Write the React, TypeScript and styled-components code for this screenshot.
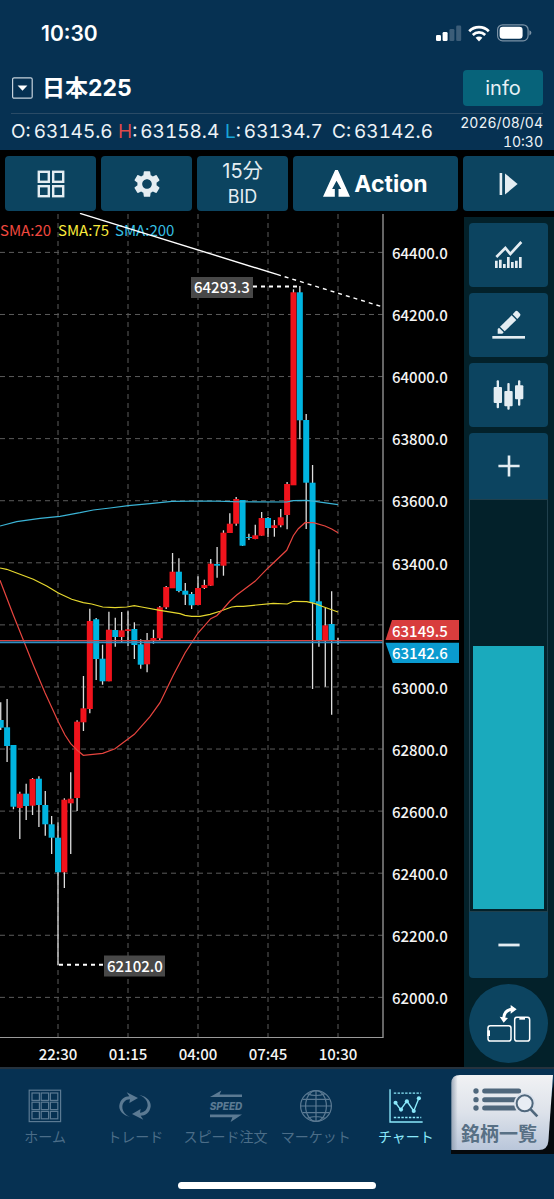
import React, { useState } from "react";
import styled, { createGlobalStyle } from "styled-components";
import { MdSettings } from "react-icons/md";

const UI_FONT = `Inter, "Noto Sans CJK JP", sans-serif`;
const CHART_FONT = `"Noto Sans CJK JP", sans-serif`;

const color = {
  header: "#063152",
  button: "#0c4460",
  rail: "#03212a",
  icon: "#e4edf2",
  up: "#f0131c",
  down: "#00b4e0",
  muted: "#4b6d88",
  active: "#8be9fb",
};

const GlobalStyle = createGlobalStyle`
  * { box-sizing: border-box; }
  body { margin: 0; background: #000; font-family: ${UI_FONT}; }
  button, select, input { font: inherit; margin: 0; }
  svg { display: block; flex: none; }
`;

const Screen = styled.div`
  min-height: 100vh;
  display: flex;
  flex-direction: column;
  background: #000;
  color: #fff;
`;

/* ---------- header ---------- */

const Header = styled.header`
  background: ${color.header};
`;

const StatusBar = styled.div`
  display: flex;
  align-items: center;
  justify-content: space-between;
  height: 66px;
  padding: 0 22px 0 41px;
`;

const Clock = styled.time`
  font-size: 21px;
  font-weight: 600;
`;

const StatusIcons = styled.div`
  display: flex;
  align-items: center;
  gap: 6px;
`;

const TitleRow = styled.div`
  display: flex;
  align-items: center;
  height: 48px;
  margin: 0 11px;
  padding-bottom: 3px;
  border-bottom: 1px solid #2a4b66;
`;

const SymbolButton = styled.button`
  display: flex;
  align-items: center;
  gap: 9px;
  padding: 0;
  border: 0;
  background: none;
  color: #fff;
  font-size: 23px;
  font-weight: 700;
  line-height: 32px;
`;

const InfoButton = styled.button`
  width: 80px;
  height: 36px;
  margin-left: auto;
  padding: 0;
  border: 0;
  border-radius: 4px;
  background: #07637a;
  color: #e6f1f5;
  font-size: 20px;
`;

const QuoteRow = styled.div`
  display: flex;
  justify-content: space-between;
  align-items: center;
  height: 36px;
  padding: 0 11px;
`;

const QuoteList = styled.dl`
  display: grid;
  grid-template-columns: repeat(4, 107px);
  margin: 0;
`;

const Quote = styled.div<{ $tint?: string }>`
  display: flex;
  gap: 3px;
  font-size: 19px;
  line-height: 24px;
  color: #edf3f7;
  font-variant-numeric: tabular-nums;

  dd { margin: 0; }
  b { font-weight: 400; color: ${(p) => p.$tint ?? "inherit"}; }
`;

const Stamp = styled.time`
  flex: none;
  text-align: right;
  font-size: 14px;
  line-height: 19px;
  font-variant-numeric: tabular-nums;
  color: #edf3f7;
`;

/* ---------- toolbar ---------- */

const Toolbar = styled.div`
  display: grid;
  grid-template-columns: 91fr 91fr 91fr 165fr 91fr;
  gap: 5px;
  padding: 6px 0 2px 5px;
`;

const ToolButton = styled.button<{ $flushRight?: boolean }>`
  display: flex;
  align-items: center;
  justify-content: center;
  gap: 4px;
  height: 55px;
  padding: 0;
  border: 0;
  border-radius: ${(p) => (p.$flushRight ? "4px 0 0 4px" : "4px")};
  background: ${color.button};
  color: ${color.icon};
`;

const Interval = styled.span`
  display: grid;
  text-align: center;
  font-size: 18px;
  line-height: 25px;
`;

const Minutes = styled.span`
  font-size: 20px;
`;

const ActionLabel = styled.span`
  color: #fff;
  font-size: 23px;
  font-weight: 700;
`;

/* ---------- chart and side rail ---------- */

const Main = styled.main`
  display: grid;
  grid-template-columns: minmax(0, 1fr) 90px;
  flex: 1;
`;

const ChartSvg = styled.svg`
  width: 100%;
  height: auto;
  font-family: ${CHART_FONT};
  font-size: 15px;
  font-weight: 500;
`;

const Rail = styled.aside`
  display: flex;
  flex-direction: column;
  gap: 6px;
  margin-top: 4px;
  padding: 6px 6px 4px 5px;
  background: ${color.rail};
`;

const RailButton = styled.button<{ $shape?: "top" | "bottom" | "round" }>`
  display: flex;
  align-items: center;
  justify-content: center;
  width: 100%;
  height: ${(p) => (p.$shape === "round" ? "79px" : p.$shape ? "66px" : "64px")};
  padding: 0;
  border: 0;
  border-radius: ${(p) =>
    p.$shape === "round" ? "50%" : p.$shape === "top" ? "4px 4px 0 0" : p.$shape === "bottom" ? "0 0 4px 4px" : "4px"};
  background: ${color.button};
`;

const Zoom = styled.div`
  display: flex;
  flex-direction: column;
  flex: 1;
`;

const ZoomTrack = styled.div`
  display: flex;
  flex: 1;
  padding: 4px 3px 2px;
  border: 1px solid #20404d;
`;

const ZoomRange = styled.input<{ $value: number }>`
  flex: 1;
  width: 100%;
  height: auto;
  min-height: 0;
  appearance: none;
  writing-mode: vertical-lr;
  direction: rtl;
  background: linear-gradient(to top, #1aaabd ${(p) => p.$value}%, transparent ${(p) => p.$value}%);

  &::-webkit-slider-thumb {
    appearance: none;
    width: 1px;
    height: 1px;
    background: transparent;
  }
`;

/* ---------- bottom navigation ---------- */

const Footer = styled.footer`
  background: ${color.header};
  border-top: 2px solid #26323d;
`;

const Nav = styled.nav`
  display: flex;
  align-items: flex-start;
  height: 85px;
`;

const NavLink = styled.a<{ $active?: boolean }>`
  display: flex;
  flex: 1;
  flex-direction: column;
  align-items: center;
  gap: 4px;
  min-width: 0;
  padding-top: 20px;
  color: ${(p) => (p.$active ? color.active : color.muted)};
  font-size: 14px;
  line-height: 20px;
  white-space: nowrap;
  text-decoration: none;

  svg { color: ${(p) => (p.$active ? color.active : "#5b7a93")}; }
`;

const ListLink = styled.a`
  position: relative;
  display: flex;
  flex-direction: column;
  align-items: center;
  gap: 2px;
  width: 103px;
  height: 79px;
  margin-top: 6px;
  padding: 12px 7px 0 0;
  color: #587085;
  font-size: 19px;
  font-weight: 700;
  line-height: 28px;
  text-decoration: none;

  > * { position: relative; }
`;

const ListPlate = styled.svg`
  && {
    position: absolute;
    inset: 0;
    width: 100%;
    height: 100%;
  }
`;

const HomeBar = styled.div`
  display: flex;
  justify-content: center;
  padding: 28px 0 10px;

  &::after {
    content: "";
    width: 198px;
    height: 7px;
    border-radius: 4px;
    background: #fff;
  }
`;

/* ---------- chart data ---------- */

type Candle = [dir: "u" | "d", top: number, bottom: number, high: number, low: number];

const candles: Candle[] = [
  ["d", 720, 727.7, 702.3, 730], ["d", 727.3, 746, 699, 762], ["d", 745, 806.7, 745, 809.3],
  ["u", 793.7, 808, 791.7, 839], ["d", 793.7, 806, 783.7, 820], ["u", 779, 805.7, 778, 815],
  ["d", 778.7, 805, 776.3, 827], ["d", 805, 824.3, 791, 835.7], ["d", 824.3, 837.7, 816, 854],
  ["d", 837.7, 872.3, 822.3, 965], ["u", 799.7, 872.3, 798.3, 888], ["u", 798.7, 803.3, 772.3, 854],
  ["u", 721.7, 798, 720.3, 811], ["u", 708.3, 722.3, 676, 731], ["u", 621, 709, 608.7, 713.3],
  ["d", 619.3, 659, 618, 680], ["d", 658.7, 681.3, 644.7, 684.7], ["u", 629.7, 681.3, 611.7, 681.3],
  ["d", 630, 637, 617.7, 646.7], ["u", 630.3, 637, 612, 642.7], ["u", 629.3, 631, 611.3, 646],
  ["d", 629, 645, 622.3, 659], ["d", 644.3, 664.7, 639.3, 668.7], ["u", 641, 664.3, 633, 672.3],
  ["u", 638, 640.7, 629.7, 643.7], ["u", 607.3, 638.3, 606, 640.3], ["u", 587, 607.3, 586, 609],
  ["u", 571.7, 588.3, 553, 588], ["d", 571.7, 591, 558.3, 592.3], ["d", 590.7, 594.7, 583, 605],
  ["d", 594, 605.3, 592, 609], ["u", 588, 605, 576.3, 605], ["u", 585, 588, 579.7, 589],
  ["u", 563.7, 585.7, 559, 586], ["d", 564, 565.7, 547, 577.7], ["u", 532.7, 565.7, 530.3, 575.7],
  ["u", 523.7, 533, 513.3, 533], ["u", 499, 523.7, 497, 525.7], ["d", 500, 545.7, 500, 546],
  ["d", 537, 538, 533.7, 540], ["u", 535.3, 539, 524.7, 539.3], ["u", 518, 535.7, 512, 535.7],
  ["d", 518, 528, 517, 537.3], ["u", 525.3, 528, 520, 536.7], ["u", 517.3, 525.3, 509, 527.3],
  ["u", 484, 515, 482, 529.3], ["u", 292.3, 485.3, 289.3, 485], ["d", 292.3, 420.3, 286, 439.3],
  ["d", 420, 482.7, 414, 529], ["d", 482.7, 602.7, 465, 689], ["d", 601.3, 640.3, 549.3, 646.7],
  ["u", 625.3, 640.3, 607.7, 686.7], ["d", 624, 640, 591.3, 714.7], ["d", 641.7, 643, 638, 644.7],
];

const sma20 =
  "0,580.3 13.3,615 24,641.7 33.3,665 45,692.7 58.3,721.7 65,735 70.7,743.7 77,750 83.3,755.3 102.7,753.3 115,748.7 134.3,734.3 150,716.7 160,702.7 173.3,675.3 185,653 198,633 210.7,618.7 216.7,615.7 222.3,610 230,601 236.7,595 255,581.3 268.3,567.7 286.7,550.3 293.3,535.7 298.3,528.7 305,522.7 313.3,522.7 325,526 331.7,529 338,532.7";
const sma75 =
  "0,568 6.7,569.3 20,574.3 33.3,579.3 46.7,586 58.3,593 71.7,599.3 83.3,602.7 91.7,604 102.7,607 115,607.7 126.7,607 134.3,605.7 141.7,607 160,610.3 180,613.7 185,615.3 191.7,616.3 200,616.3 210,614.3 220,611.3 231.7,607 236.7,606.3 243.3,606.3 273.3,603.3 287.3,604 293.3,601.3 306.7,601.7 315,603.7 323.3,606.7 338,612";
const sma200 =
  "0,526 16.7,521.7 40,518.3 60,516.3 80,512.7 93.3,510 110,508 128.3,505.7 150,503.7 171.7,501.3 210,501 233.3,501.7 286.7,502 293.3,500.7 306.7,500.3 315,501.3 338,504.7";

const PRICE_TOP = 64400;
const PRICE_STEP = 200;
const prices = Array.from({ length: 13 }, (_, i) => PRICE_TOP - i * PRICE_STEP);
const times = ["22:30", "01:15", "04:00", "07:45", "10:30"];

const priceY = (p: number) => 252.4 + ((PRICE_TOP - p) / PRICE_STEP) * 62.08;
const timeX = (i: number) => 58 + i * 70;
const candleX = (i: number) => 58 + (i - 9) * 6.364;

function PriceChart() {
  return (
    <ChartSvg viewBox="0 213 464 854" role="img" aria-label="日本225 15分足チャート">
      <g stroke="#5c5c5c" strokeWidth="1" strokeDasharray="5 4">
        {prices.map((p) => (
          <line key={p} x1="0" x2="383" y1={priceY(p)} y2={priceY(p)} />
        ))}
        {times.map((t, i) => (
          <line key={t} x1={timeX(i)} x2={timeX(i)} y1="214" y2="1037" />
        ))}
      </g>

      <g fontWeight="400">
        <text x="0" y="235.5" fill="#f0483f">SMA:20</text>
        <text x="58" y="235.5" fill="#f9ea3c">SMA:75</text>
        <text x="115" y="235.5" fill="#35bfe2">SMA:200</text>
      </g>

      {candles.map(([dir, top, bottom, high, low], i) => (
        <g key={i}>
          <line x1={candleX(i)} x2={candleX(i)} y1={high} y2={low} stroke="#dedede" strokeWidth="1.3" />
          <rect
            x={candleX(i) - 3}
            y={top}
            width="6"
            height={bottom - top}
            fill={dir === "u" ? color.up : color.down}
          />
        </g>
      ))}

      <g fill="none" strokeWidth="1.2">
        <polyline points={sma200} stroke="#3bb4d6" />
        <polyline points={sma75} stroke="#e6d82e" />
        <polyline points={sma20} stroke="#e8453f" />
      </g>

      <line x1="0" x2="383" y1="640.7" y2="640.7" stroke="#d8403f" strokeWidth="1.3" />
      <line x1="0" x2="383" y1="642.4" y2="642.4" stroke="#2e8fc4" strokeWidth="1.6" />

      <g stroke="#fff" strokeWidth="1.4">
        <line x1="80" y1="213.4" x2="277" y2="274.4" />
        <line x1="277" y1="274.4" x2="383" y2="307" strokeDasharray="4 4" />
        <line x1="253" y1="286.4" x2="300" y2="286.4" strokeDasharray="4 4" strokeWidth="2" />
        <line x1="59" y1="964.8" x2="104" y2="964.8" strokeDasharray="4 4" strokeWidth="2" />
      </g>

      <rect x="191" y="277" width="62" height="21" fill="#484848" />
      <text x="194" y="293.4" fill="#fff">64293.3</text>
      <rect x="104" y="955.5" width="61" height="21" fill="#484848" />
      <text x="107" y="971.7" fill="#fff">62102.0</text>

      <line x1="383" x2="383" y1="214" y2="1037.5" stroke="#7f7f7f" strokeWidth="1.6" />
      <line x1="0" x2="383.5" y1="1037.5" y2="1037.5" stroke="#9a9a9a" strokeWidth="1" />

      <g fill="#f4f4f4">
        {prices
          .filter((p) => p !== 63200)
          .map((p) => (
            <text key={p} x="392" y={priceY(p) + 6.7}>
              {p.toFixed(1)}
            </text>
          ))}
        {times.map((t, i) => (
          <text key={t} x={timeX(i)} y="1060" textAnchor="middle">
            {t}
          </text>
        ))}
      </g>

      <path d="M392 620H459V640H385.5Z" fill="#d83d3d" />
      <path d="M385.5 642.7H459V663H392.7Z" fill="#0a9bd0" />
      <text x="392" y="636.8" fill="#fff">63149.5</text>
      <text x="392" y="659.4" fill="#fff">63142.6</text>
    </ChartSvg>
  );
}

/* ---------- icons ---------- */

const StatusGlyphs = () => (
  <StatusIcons>
    <svg width="26" height="16" viewBox="0 0 26 16">
      <rect x="0" y="10" width="5" height="6" rx="1.3" fill="#fff" />
      <rect x="6.6" y="7" width="5" height="9" rx="1.3" fill="#fff" />
      <rect x="13.4" y="4" width="5" height="12" rx="1.3" fill="#3c5d78" />
      <rect x="20.2" y="0.5" width="5" height="15.5" rx="1.3" fill="#3c5d78" />
    </svg>
    <svg width="22" height="17" viewBox="0 0 22 17" fill="none" stroke="#fff" strokeWidth="2.7">
      <path d="M1.2 6.2A13.8 13.8 0 0 1 20.8 6.2" />
      <path d="M4.8 10A8.8 8.8 0 0 1 17.2 10" />
      <path d="M7.6 12.8A4.8 4.8 0 0 1 14.4 12.8L11 16.4Z" fill="#fff" stroke="none" />
    </svg>
    <svg width="36" height="18" viewBox="0 0 36 18">
      <rect x="1.6" y="0.8" width="30.5" height="16" rx="5" fill="none" stroke="#7b92a6" strokeWidth="1.2" />
      <rect x="3.6" y="2.8" width="23" height="12" rx="3.2" fill="#fff" />
      <path d="M33.4 6.2Q35.4 7 35.4 8.8T33.4 11.4Z" fill="#7b92a6" />
    </svg>
  </StatusIcons>
);

const DropdownIcon = () => (
  <svg width="22" height="22" viewBox="0 0 22 22" aria-hidden="true">
    <rect x="1.6" y="0.8" width="19.6" height="20.4" rx="1.5" fill="none" stroke="#c5d2dc" strokeWidth="1.2" />
    <path d="M6.6 8.4H16.4L11.5 13.8Z" fill="#fff" />
  </svg>
);

const GridIcon = () => (
  <svg width="28" height="28" viewBox="0 0 28 28" fill="none" stroke={color.icon} strokeWidth="2.4" aria-hidden="true">
    <rect x="1.8" y="1.8" width="10" height="10" />
    <rect x="16.2" y="1.8" width="10" height="10" />
    <rect x="1.8" y="16.2" width="10" height="10" />
    <rect x="16.2" y="16.2" width="10" height="10" />
  </svg>
);

const ActionIcon = () => (
  <svg width="27" height="27" viewBox="20 25 80 80" aria-hidden="true">
    <path
      fillRule="evenodd"
      fill="#fff"
      d="M56 25H64L100 104H66V81H74L60 57L47 81H55V104H20Z"
    />
  </svg>
);

const StepIcon = () => (
  <svg width="20" height="24" viewBox="0 0 20 24" fill={color.icon} aria-hidden="true">
    <rect x="0.6" y="1" width="2.6" height="22" />
    <path d="M6 1.4L18.6 12L6 22.6Z" />
  </svg>
);

const IndicatorIcon = () => (
  <svg width="28" height="28" viewBox="675 108 84 84" fill={color.icon} aria-hidden="true">
    <path d="M679 156L706 129L721 147L754 111" fill="none" stroke={color.icon} strokeWidth="8" />
    <path d="M675 167h8v22h-8zM687 164h8v25h-8zM699 177h8v12h-8zM711 156h8v33h-8zM723 171h8v18h-8zM735 167h8v22h-8zM747 156h8v33h-8z" />
  </svg>
);

const PencilIcon = () => (
  <svg width="33" height="30" viewBox="666 316 99 90" fill={color.icon} aria-hidden="true">
    <rect x="667" y="394" width="98" height="8" />
    <path d="M683 387V373L687 369L701 383L697 387Z" />
    <path d="M690 366L725 332L739 346L704 380Z" />
    <path d="M728 329L737 319Q740 317 743 320L750 327Q753 330 750 334L742 343Z" />
  </svg>
);

const CandlesIcon = () => (
  <svg width="31" height="30" viewBox="669 524 93 90" fill={color.icon} aria-hidden="true">
    <rect x="671" y="545" width="25" height="48" rx="3" />
    <rect x="680" y="525" width="7" height="84" rx="3" />
    <rect x="703" y="557" width="25" height="46" rx="3" />
    <rect x="712" y="533" width="7" height="80" rx="3" />
    <rect x="735" y="540" width="25" height="42" rx="3" />
    <rect x="744" y="525" width="7" height="76" rx="3" />
  </svg>
);

const PlusIcon = () => (
  <svg width="22" height="22" viewBox="0 0 22 22" stroke={color.icon} strokeWidth="2.6" aria-hidden="true">
    <path d="M11 0.4V21.6M0.4 11H21.6" />
  </svg>
);

const MinusIcon = () => (
  <svg width="22" height="22" viewBox="0 0 22 22" stroke={color.icon} strokeWidth="2.8" aria-hidden="true">
    <path d="M0.4 11H21.6" />
  </svg>
);

const RotateIcon = () => (
  <svg width="44" height="37" viewBox="320 432 132 111" fill="none" stroke="#fff" strokeWidth="4.5" aria-hidden="true">
    <rect x="323" y="494" width="69" height="46" rx="7" />
    <rect x="403" y="469" width="45" height="71" rx="7" />
    <path d="M325 508V525" strokeWidth="8" />
    <path d="M417 472H434" strokeWidth="8" />
    <path d="M370 472Q372 446 396 445" strokeWidth="9" />
    <path d="M391 432L409 445L391 458ZM358 467L383 471L370 485Z" fill="#fff" stroke="none" />
  </svg>
);

const HomeIcon = () => (
  <svg width="34" height="34" viewBox="0 0 34 34" fill="none" stroke="currentColor" strokeWidth="1.2" aria-hidden="true">
    <rect x="1.2" y="1.2" width="31.4" height="31.4" />
    {[4, 13.2, 22.4].map((y) =>
      [4, 13.2, 22.4].map((x) => <rect key={`${x}-${y}`} x={x} y={y} width="7.4" height="7.4" />)
    )}
  </svg>
);

const TradeIcon = () => (
  <svg width="34" height="34" viewBox="24 11 102 102" fill="currentColor" aria-hidden="true">
    <path d="M63 96C36 90 26 74 28 60C31 42 44 33 58 33L50 21L84 38L58 53L60 42C46 42 38 52 37 64C37 78 46 89 63 96Z" />
    <path d="M87 28C114 34 124 50 122 64C119 82 106 91 92 91L100 103L66 86L92 71L90 82C104 82 112 72 113 60C113 46 104 35 87 28Z" />
  </svg>
);

const SpeedIcon = () => (
  <svg width="34" height="34" viewBox="0 0 34 34" fill="currentColor" aria-hidden="true">
    <path d="M1 8L12.4 1.4L10.6 5.6H33V8Z" />
    <path d="M33 25.6L21.6 33L23.4 28.2H1V25.6Z" />
    <text x="17" y="20.6" textAnchor="middle" fontFamily="Inter, sans-serif" fontSize="10" fontWeight="800" fontStyle="italic">
      SPEED
    </text>
  </svg>
);

const GlobeIcon = () => (
  <svg width="34" height="34" viewBox="0 0 34 34" fill="none" stroke="currentColor" strokeWidth="1.2" aria-hidden="true">
    <circle cx="17" cy="17" r="15.4" />
    <ellipse cx="17" cy="17" rx="10.4" ry="15.4" />
    <path d="M17 1.6V32.4M1.6 17H32.4M3.4 10.4H30.6M3.4 23.6H30.6M8 4.6Q17 8.4 26 4.6M8 29.4Q17 25.6 26 29.4" />
  </svg>
);

const ChartIcon = () => (
  <svg width="34" height="34" viewBox="359 80 99 99" fill="none" stroke="currentColor" strokeWidth="4" aria-hidden="true">
    <path d="M362 81V176H457" />
    <path d="M373 92H453M373 163H453" strokeDasharray="7 4" />
    <path d="M378 120L393 140L411 115L431 144L446 107" />
    <g fill="currentColor" stroke="none">
      <circle cx="378" cy="120" r="6" />
      <circle cx="394" cy="140" r="6" />
      <circle cx="411" cy="116" r="6" />
      <circle cx="431" cy="144" r="6" />
      <circle cx="446" cy="107" r="6" />
    </g>
  </svg>
);

const ListIcon = () => (
  <svg width="80" height="32" viewBox="568 82 240 96" fill="#4f677c" stroke="#4f677c" aria-hidden="true">
    <g stroke="none">
      <circle cx="619" cy="94" r="8" />
      <circle cx="619" cy="120" r="8" />
      <circle cx="619" cy="145" r="8" />
    </g>
    <path d="M645 94H747M645 120H740M645 145H736" strokeWidth="15" strokeLinecap="round" />
    <circle cx="765" cy="131" r="32" fill="#dbe2ec" stroke="none" />
    <circle cx="765" cy="131" r="24" fill="#e8edf4" strokeWidth="6" />
    <path d="M783 149L803 170" strokeWidth="8" />
  </svg>
);

const PlateShape = () => (
  <ListPlate viewBox="0 0 103 79" preserveAspectRatio="none" aria-hidden="true">
    <defs>
      <linearGradient id="plate" x1="0" y1="0" x2="0" y2="1">
        <stop offset="0" stopColor="#f1f2f4" />
        <stop offset="0.5" stopColor="#dde2ea" />
        <stop offset="1" stopColor="#b9c6da" />
      </linearGradient>
      <linearGradient id="edge" x1="0" y1="0" x2="1" y2="0">
        <stop offset="0" stopColor="#8d9bad" stopOpacity="0.8" />
        <stop offset="0.06" stopColor="#8d9bad" stopOpacity="0" />
      </linearGradient>
    </defs>
    <path d="M0 74H92L103 6V79H0Z" fill="#05090d" />
    <path d="M0.6 75V8Q0.6 0 9 0H102L97.4 66Q96.6 75 88 75Z" fill="url(#plate)" />
    <path d="M0.6 75V8Q0.6 0 9 0H102L97.4 66Q96.6 75 88 75Z" fill="url(#edge)" />
  </ListPlate>
);

/* ---------- page ---------- */

const quotes = [
  { label: "O", name: "始値", value: "63145.6" },
  { label: "H", name: "高値", value: "63158.4", tint: "#dd4a4a" },
  { label: "L", name: "安値", value: "63134.7", tint: "#19a5d6" },
  { label: "C", name: "終値", value: "63142.6" },
];

const navItems = [
  { label: "ホーム", Icon: HomeIcon },
  { label: "トレード", Icon: TradeIcon },
  { label: "スピード注文", Icon: SpeedIcon },
  { label: "マーケット", Icon: GlobeIcon },
  { label: "チャート", Icon: ChartIcon, active: true },
];

export default function App() {
  const [zoom, setZoom] = useState(65);

  return (
    <Screen>
      <GlobalStyle />
      <Header>
        <StatusBar>
          <Clock>10:30</Clock>
          <StatusGlyphs />
        </StatusBar>
        <TitleRow>
          <SymbolButton type="button">
            <DropdownIcon />
            日本225
          </SymbolButton>
          <InfoButton type="button">info</InfoButton>
        </TitleRow>
        <QuoteRow>
          <QuoteList>
            {quotes.map((q) => (
              <Quote key={q.label} $tint={q.tint}>
                <dt title={q.name}>
                  <b>{q.label}</b>:
                </dt>
                <dd>{q.value}</dd>
              </Quote>
            ))}
          </QuoteList>
          <Stamp>
            2026/08/04
            <br />
            10:30
          </Stamp>
        </QuoteRow>
      </Header>

      <Toolbar>
        <ToolButton type="button" aria-label="レイアウト">
          <GridIcon />
        </ToolButton>
        <ToolButton type="button" aria-label="設定">
          <MdSettings size={32} />
        </ToolButton>
        <ToolButton type="button">
          <Interval>
            <Minutes>15分</Minutes>
            <span>BID</span>
          </Interval>
        </ToolButton>
        <ToolButton type="button">
          <ActionIcon />
          <ActionLabel>Action</ActionLabel>
        </ToolButton>
        <ToolButton type="button" $flushRight aria-label="最新へ移動">
          <StepIcon />
        </ToolButton>
      </Toolbar>

      <Main>
        <PriceChart />
        <Rail>
          <RailButton type="button" aria-label="テクニカル">
            <IndicatorIcon />
          </RailButton>
          <RailButton type="button" aria-label="描画">
            <PencilIcon />
          </RailButton>
          <RailButton type="button" aria-label="チャート種類">
            <CandlesIcon />
          </RailButton>
          <Zoom>
            <RailButton type="button" $shape="top" aria-label="拡大" onClick={() => setZoom(Math.min(100, zoom + 5))}>
              <PlusIcon />
            </RailButton>
            <ZoomTrack>
              <ZoomRange
                type="range"
                min={0}
                max={100}
                value={zoom}
                $value={zoom}
                aria-label="表示倍率"
                onChange={(e) => setZoom(Number(e.target.value))}
              />
            </ZoomTrack>
            <RailButton type="button" $shape="bottom" aria-label="縮小" onClick={() => setZoom(Math.max(0, zoom - 5))}>
              <MinusIcon />
            </RailButton>
          </Zoom>
          <RailButton type="button" $shape="round" aria-label="画面回転">
            <RotateIcon />
          </RailButton>
        </Rail>
      </Main>

      <Footer>
        <Nav>
          {navItems.map(({ label, Icon, active }) => (
            <NavLink key={label} href="#" $active={active}>
              <Icon />
              {label}
            </NavLink>
          ))}
          <ListLink href="#">
            <PlateShape />
            <ListIcon />
            <span>銘柄一覧</span>
          </ListLink>
        </Nav>
        <HomeBar />
      </Footer>
    </Screen>
  );
}
